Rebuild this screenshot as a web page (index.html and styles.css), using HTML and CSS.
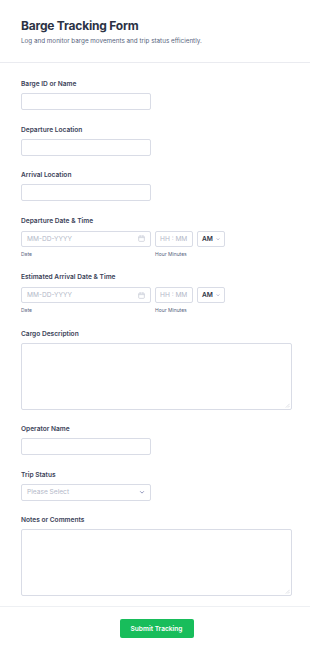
FILE: index.html
```html
<!DOCTYPE html>
<html lang="en">
  <head>
    <meta charset="UTF-8" />
    <meta name="viewport" content="width=device-width, initial-scale=1.0" />
    <title>Barge Tracking Form</title>
    <link rel="stylesheet" href="styles.css">
  </head>

  <body>
    <header class="form-header">
      <h1>Barge Tracking Form</h1>
      <p>Log and monitor barge movements and trip status efficiently.</p>
    </header>

    <main class="form-body">
      <div class="field">
        <label>Barge ID or Name</label>
        <input class="input short" type="text" />
      </div>

      <div class="field">
        <label>Departure Location</label>
        <input class="input short" type="text" />
      </div>

      <div class="field">
        <label>Arrival Location</label>
        <input class="input short" type="text" />
      </div>

      <div class="field">
        <label>Departure Date &amp; Time</label>
        <div class="datetime">
          <div class="part">
            <div class="input date-box">
              <span class="placeholder">MM-DD-YYYY</span>
              <svg class="cal" viewBox="0 0 8 8" width="7" height="7">
                <rect x="0.75" y="1.25" width="6.5" height="6" rx="1" fill="none" stroke="#c4c8d4" stroke-width="0.8" />
                <path d="M0.75 3h6.5M2.5 0.4v1.6M5.5 0.4v1.6" stroke="#c4c8d4" stroke-width="0.8" />
              </svg>
            </div>
            <span class="sub">Date</span>
          </div>
          <div class="part">
            <div class="input time-box"><span class="placeholder">HH : MM</span></div>
            <span class="sub">Hour Minutes</span>
          </div>
          <div class="part">
            <div class="input ampm-box">
              <span>AM</span>
              <svg viewBox="0 0 8 8" width="6" height="6"><path d="M1.5 3l2.5 2.5 2.5-2.5" fill="none" stroke="#6f76a7" stroke-width="1" /></svg>
            </div>
          </div>
        </div>
      </div>

      <div class="field">
        <label>Estimated Arrival Date &amp; Time</label>
        <div class="datetime">
          <div class="part">
            <div class="input date-box">
              <span class="placeholder">MM-DD-YYYY</span>
              <svg class="cal" viewBox="0 0 8 8" width="7" height="7">
                <rect x="0.75" y="1.25" width="6.5" height="6" rx="1" fill="none" stroke="#c4c8d4" stroke-width="0.8" />
                <path d="M0.75 3h6.5M2.5 0.4v1.6M5.5 0.4v1.6" stroke="#c4c8d4" stroke-width="0.8" />
              </svg>
            </div>
            <span class="sub">Date</span>
          </div>
          <div class="part">
            <div class="input time-box"><span class="placeholder">HH : MM</span></div>
            <span class="sub">Hour Minutes</span>
          </div>
          <div class="part">
            <div class="input ampm-box">
              <span>AM</span>
              <svg viewBox="0 0 8 8" width="6" height="6"><path d="M1.5 3l2.5 2.5 2.5-2.5" fill="none" stroke="#6f76a7" stroke-width="1" /></svg>
            </div>
          </div>
        </div>
      </div>

      <div class="field">
        <label>Cargo Description</label>
        <div class="area-wrap">
          <textarea class="input area"></textarea>
          <svg class="grip" viewBox="0 0 6 6" width="5" height="5"><path d="M5.5 1L1 5.5M5.5 3.5L3.5 5.5" stroke="#c9ccd6" stroke-width="0.7" /></svg>
        </div>
      </div>

      <div class="field">
        <label>Operator Name</label>
        <input class="input short" type="text" />
      </div>

      <div class="field">
        <label>Trip Status</label>
        <div class="input short select-box">
          <span class="placeholder">Please Select</span>
          <svg viewBox="0 0 8 8" width="6" height="6"><path d="M1.5 3l2.5 2.5 2.5-2.5" fill="none" stroke="#6f76a7" stroke-width="1" /></svg>
        </div>
      </div>

      <div class="field last">
        <label>Notes or Comments</label>
        <div class="area-wrap">
          <textarea class="input area"></textarea>
          <svg class="grip" viewBox="0 0 6 6" width="5" height="5"><path d="M5.5 1L1 5.5M5.5 3.5L3.5 5.5" stroke="#c9ccd6" stroke-width="0.7" /></svg>
        </div>
      </div>
    </main>

    <footer class="form-footer">
      <button type="button">Submit Tracking</button>
    </footer>
  </body>
</html>
```

FILE: styles.css
```css
body {
  margin: 0;
  font-family: Inter, "Noto Sans", sans-serif;
  background: #ffffff;
  color: #2c3345;
}

.form-header {
  padding: 17px 18px 16px 21px;
  border-bottom: 1px solid #eaebf0;
}

.form-header h1 {
  margin: 0;
  font-size: 12px;
  line-height: 17px;
  font-weight: 700;
  letter-spacing: -0.2px;
  color: #2c3345;
}

.form-header p {
  margin: 2px 0 0;
  font-size: 6.3px;
  line-height: 10px;
  color: #57647e;
}

.form-body {
  padding: 16px 18px 10px 21px;
  display: flex;
  flex-direction: column;
}

.field {
  display: flex;
  flex-direction: column;
  margin-bottom: 14.5px;
}

.field.last {
  margin-bottom: 0;
}

.field label {
  font-size: 6.6px;
  line-height: 10px;
  font-weight: 600;
  color: #3b4359;
  margin-bottom: 4px;
}

.input {
  box-sizing: border-box;
  border: 1px solid #d9dce6;
  border-radius: 2px;
  background: #ffffff;
  font-family: inherit;
  font-size: 6.6px;
  margin: 0;
  padding: 0 5px;
  white-space: nowrap;
}

.short {
  width: 130px;
  height: 17px;
}

.area-wrap {
  position: relative;
  width: 271px;
}

.area {
  display: block;
  width: 271px;
  height: 67px;
  resize: none;
}

.grip {
  position: absolute;
  right: 2px;
  bottom: 2px;
}

.placeholder {
  color: #b3b8c8;
}

.datetime {
  display: flex;
  gap: 4px;
  margin-top: 1px;
}

.part {
  display: flex;
  flex-direction: column;
}

.date-box,
.time-box,
.ampm-box,
.select-box {
  display: flex;
  align-items: center;
  height: 16px;
}

.date-box {
  width: 130px;
  justify-content: space-between;
}

.time-box {
  width: 38px;
  padding: 0 4px;
}

.ampm-box {
  width: 28px;
  padding: 0 4px;
  gap: 3px;
  font-weight: 600;
  font-size: 6.6px;
  color: #2c3345;
}

.select-box {
  height: 17px;
  justify-content: space-between;
}

.sub {
  font-size: 5px;
  line-height: 8px;
  color: #57647e;
  margin-top: 3px;
}

.form-footer {
  border-top: 1px solid #eef0f3;
  padding: 12px 18px 20px 21px;
  display: flex;
  justify-content: center;
}

.form-footer button {
  width: 74px;
  height: 19px;
  border: none;
  border-radius: 2px;
  background: #18bd5b;
  color: #ffffff;
  font-family: inherit;
  font-size: 6.6px;
  font-weight: 600;
  cursor: pointer;
}
```
